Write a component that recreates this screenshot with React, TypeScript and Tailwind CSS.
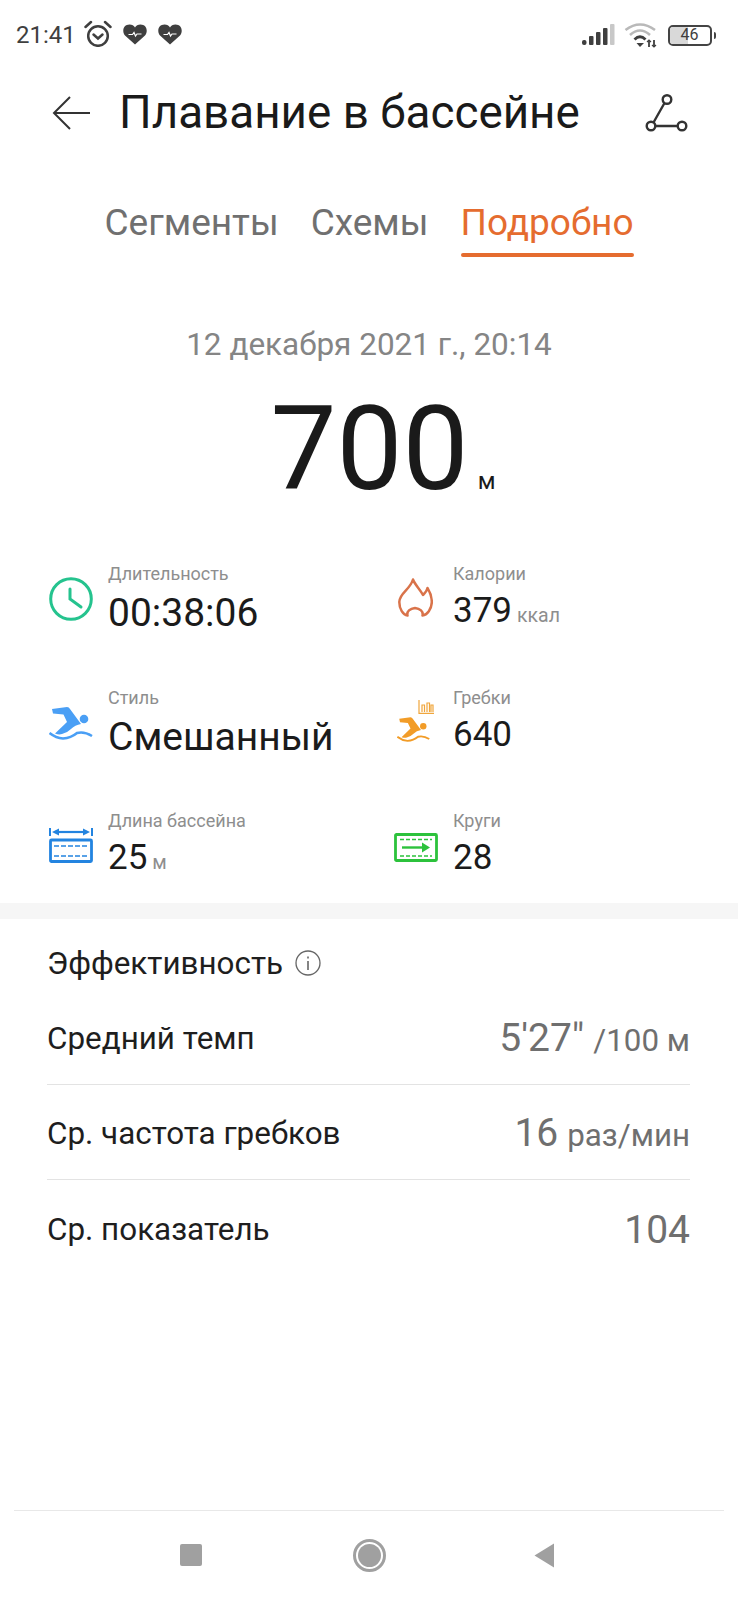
import React from "react";

const Swimmer = ({ color, className }: { color: string; className: string }) => (
  <svg viewBox="0 0 44 34" className={className} fill={color}>
    <path d="M3 2 L18 0 Q20 0 21 2 L32 17 Q26 18 22 22 Q18 26 13 27 Q10 28 6 26.500 L18 15 L14.500 7.500 L4 6.500 Z" />
    <circle cx="35" cy="12" r="4.300" />
    <path d="M0.500 26 Q7 31 14 31.500 Q22 31 28 26 Q35 24 43 29" fill="none" stroke={color} strokeWidth="2.500" />
  </svg>
);

const Stat = ({ icon, label, value, unit, big }: { icon: React.ReactNode; label: string; value: string; unit?: string; big?: boolean }) => (
  <div className="flex items-start">
    <div className="w-[59px] h-[70px] flex items-center shrink-0">{icon}</div>
    <div className="flex flex-col">
      <span className="text-[18px] leading-[20px] text-[#8e8e8e]">{label}</span>
      <span className={`flex items-baseline h-[44px] leading-[44px] text-[#1b1b1b] ${big ? "mt-[7px]" : "mt-[5px]"}`}>
        <span className={big ? "text-[39px] leading-[44px]" : "text-[35px] leading-[44px]"}>{value}</span>
        {unit && <span className="text-[19.500px] text-[#8e8e8e] ml-[5px]">{unit}</span>}
      </span>
    </div>
  </div>
);

const Row = ({ label, value, unit, last }: { label: string; value: string; unit?: string; last?: boolean }) => (
  <div className={`flex items-center justify-between h-[95px] pt-[4px] ${last ? "" : "border-b border-[#e3e3e3]"}`}>
    <span className="text-[31.400px] text-[#1e1e1e]">{label}</span>
    <span className="flex items-baseline text-[#6f6f6f]">
      <span className="text-[39px] leading-[44px]">{value}</span>
      {unit && <span className="text-[31.300px] leading-[44px] ml-[9px]">{unit}</span>}
    </span>
  </div>
);

export default function App() {
  return (
    <div className="w-[738px] h-[1599px] bg-white flex flex-col overflow-hidden font-['Roboto',sans-serif]">
      <div className="h-[70px] flex items-center justify-between pl-[16px] pr-[22px] shrink-0">
        <div className="flex items-center text-[#3f3f3f]">
          <span className="text-[24px] leading-[28px]">21:41</span>
          <svg viewBox="0 0 28 27" className="w-[28px] h-[27px] ml-[8px] mb-[4px]" fill="none" stroke="#3f3f3f" strokeWidth="2.500">
            <circle cx="14" cy="16" r="9.800" />
            <path d="M9.500 14.500 L14 18.500 L18.500 14.500" strokeLinecap="round" />
            <path d="M1.500 7 L7 2 M26.500 7 L21 2" strokeLinecap="round" />
          </svg>
          {[0, 1].map((i) => (
            <svg key={i} viewBox="0 0 24 21" className="w-[24px] h-[21px] mb-[2px] ml-[11px]">
              <path d="M12 20.500 L2 11.500 C-1.500 7 0.500 0.500 6.500 0.500 C9 0.500 11 1.500 12 3.500 C13 1.500 15 0.500 17.500 0.500 C23.500 0.500 25.500 7 22 11.500 Z" fill="#3f3f3f" />
              <path d="M5.500 10.500 H9.500 L11 8.500 L12.500 12 L14 10 H18.500" fill="none" stroke="#fff" strokeWidth="1.200" />
            </svg>
          ))}
        </div>
        <div className="flex items-center">
          <svg viewBox="0 0 34 22" className="w-[34px] h-[22px]">
            <rect x="0" y="16" width="4.500" height="5" rx="2" fill="#3f3f3f" />
            <rect x="7" y="12" width="4.500" height="9" rx="1" fill="#3f3f3f" />
            <rect x="14" y="8" width="4.500" height="13" rx="1" fill="#3f3f3f" />
            <rect x="21" y="4" width="4.500" height="17" rx="1" fill="#3f3f3f" />
            <rect x="28" y="0" width="4.500" height="21" rx="1" fill="#c8c8c8" />
          </svg>
          <svg viewBox="0 0 34 26" className="w-[34px] h-[26px] ml-[8px]" fill="none">
            <path d="M1.500 8 Q16 -3 31 8" stroke="#b9b9b9" strokeWidth="2.600" />
            <path d="M6 13 Q16 4 26 13" stroke="#b9b9b9" strokeWidth="2.600" />
            <path d="M10.500 17.500 Q16 12 21.500 17.500" stroke="#3f3f3f" strokeWidth="2.800" />
            <path d="M12.500 21 L20 21 L16 25 Z" fill="#3f3f3f" />
            <path d="M25 18 V25 M30 18 V25" stroke="#3f3f3f" strokeWidth="1.800" />
            <path d="M23 20 L25 18 L27 20 M28 23 L30 25 L32 23" stroke="#3f3f3f" strokeWidth="1.200" />
          </svg>
          <div className="relative ml-[10px] w-[44px] h-[21px] rounded-[5px] border-[2.500px] border-[#444] flex items-center overflow-hidden">
            <div className="w-[46%] h-full bg-[#d9d9d9]" />
            <span className="absolute inset-0 text-center text-[16px] leading-[16px] text-[#3f3f3f]">46</span>
          </div>
          <div className="w-[2.500px] h-[7px] ml-[2px] bg-[#444] rounded-r-[2px]" />
        </div>
      </div>

      <div className="h-[86px] flex items-center pl-[52px] pr-[50px] shrink-0">
        <svg viewBox="0 0 38 34" className="w-[38px] h-[34px] shrink-0" fill="none" stroke="#333" strokeWidth="2">
          <path d="M38 17 H2 M18 1 L2 17 L18 33" />
        </svg>
        <span className="ml-[29px] text-[45.800px] leading-[50px] text-[#1a1a1a] whitespace-nowrap">Плавание в бассейне</span>
        <svg viewBox="0 0 43 38" className="w-[43px] h-[38px] ml-auto shrink-0" fill="none" stroke="#333" strokeWidth="2.400">
          <circle cx="22" cy="5.500" r="4.300" />
          <circle cx="6" cy="32" r="4.300" />
          <circle cx="37" cy="32" r="4.300" />
          <path d="M19.500 9 L8.500 28.500 M10.300 32 H32.700" />
        </svg>
      </div>

      <div className="h-[170px] flex items-start justify-center pt-[39px] gap-[32px] text-[37px] text-[#707070] shrink-0">
        <span className="leading-[50px] pt-[3px]">Сегменты</span>
        <span className="leading-[50px] pt-[3px]">Схемы</span>
        <span className="flex flex-col items-center text-[#e56c2f]">
          <span className="leading-[50px] pt-[3px]">Подробно</span>
          <span className="w-full h-[4px] rounded-full bg-[#e56c2f] mt-[5px]" />
        </span>
      </div>

      <div className="text-center text-[31.500px] leading-[40px] text-[#858585] mt-[-1px] shrink-0">12 декабря 2021 г., 20:14</div>

      <div className="flex items-baseline justify-center h-[136px] mt-[16px] shrink-0 pl-[28px]">
        <span className="text-[117.500px] leading-[136px] text-[#1a1a1a]">700</span>
        <span className="text-[24px] text-[#1a1a1a] ml-[9px]">м</span>
      </div>

      <div className="grid grid-cols-[345px_1fr] grid-rows-[123.5px_123.5px_92px] pl-[49px] mt-[47px] shrink-0">
        <Stat
          label="Длительность"
          value="00:38:06"
          big
          icon={
            <svg viewBox="0 0 44 44" className="w-[44px] h-[44px]" fill="none" stroke="#25c38e" strokeWidth="3">
              <circle cx="22" cy="22" r="20.300" />
              <path d="M21 12 V22 L32 30" strokeLinecap="round" />
            </svg>
          }
        />
        <Stat
          label="Калории"
          value="379"
          unit="ккал"
          icon={
            <svg viewBox="0 0 35 39" className="w-[35px] h-[39px] ml-[4px] mb-[3px]" fill="none" stroke="#d9734a" strokeWidth="2.500" strokeLinejoin="round">
              <path d="M15 1.500 C17 7 22 11 25 17 C27 15 29 13 29.500 10 C32 14 33.800 18 33.800 24 C33.800 31 29 37 24.500 37.500 C25.500 33.500 22 30.500 17 30 C12 30.500 8.500 33.500 9.500 37.500 C5 37 1.300 31 1.300 24 C1.300 15 12 12 15 1.500 Z" />
            </svg>
          }
        />
        <Stat
          label="Стиль"
          value="Смешанный"
          big
          icon={<Swimmer color="#4a9ff5" className="w-[44px] h-[34px] mt-[2px]" />}
        />
        <Stat
          label="Гребки"
          value="640"
          icon={
            <div className="relative w-[38px] h-[42px] ml-[3px] mt-[-4px]">
              <svg viewBox="0 0 16 14" className="absolute left-[21px] top-0 w-[16px] h-[14px]" fill="none" stroke="#f0a63c" strokeWidth="1.200">
                <path d="M1 0 V13.400 H16 M4 12 V5 H6.500 V12 M9 12 V3 H11.500 V12 M13 12 V5 H15 V12" />
              </svg>
              <Swimmer color="#f29c27" className="absolute left-0 bottom-[-1px] w-[33px] h-[26px]" />
            </div>
          }
        />
        <Stat
          label="Длина бассейна"
          value="25"
          unit="м"
          icon={
            <svg viewBox="0 0 44 36" className="w-[44px] h-[36px] mt-[-2px]" fill="none" stroke="#2384e0">
              <path d="M1 1 V9 M43 1 V9" strokeWidth="2" />
              <path d="M6 5 H38" strokeWidth="2.200" />
              <path d="M3 5 L10 1.500 V8.500 Z M41 5 L34 1.500 V8.500 Z" fill="#2384e0" stroke="none" />
              <rect x="1.500" y="13" width="41" height="21.500" rx="1" strokeWidth="2.800" />
              <path d="M5 19 H39 M5 29 H39" strokeWidth="1.500" strokeDasharray="5 2" />
            </svg>
          }
        />
        <Stat
          label="Круги"
          value="28"
          icon={
            <svg viewBox="0 0 44 29" className="w-[44px] h-[29px] mt-[2px]" fill="none" stroke="#2cc23c">
              <rect x="1.500" y="1.500" width="41" height="26" rx="1" strokeWidth="2.800" />
              <path d="M6 6.500 H38 M6 23 H38" strokeWidth="1.500" strokeDasharray="4 2" />
              <path d="M8 14.500 H28" strokeWidth="2.400" />
              <path d="M28 9.500 L36 14.500 L28 19.500 Z" fill="#2cc23c" stroke="none" />
            </svg>
          }
        />
      </div>

      <div className="h-[16px] bg-[#f6f6f6] shrink-0" />

      <div className="pl-[47px] pr-[48px] shrink-0">
        <div className="h-[75px] flex items-center pt-[15px]">
          <span className="text-[31.400px] leading-[36px] text-[#1e1e1e]">Эффективность</span>
          <svg viewBox="0 0 26 26" className="w-[26px] h-[26px] ml-[12px] mb-[3px]" fill="none" stroke="#666" strokeWidth="1.300">
            <circle cx="13" cy="13" r="12" />
            <path d="M13 11 V20 M13 6.500 V8.500" strokeWidth="1.600" />
          </svg>
        </div>
        <div className="mt-[-4px]">
          <Row label="Средний темп" value={"5'27\""} unit="/100 м" />
          <Row label="Ср. частота гребков" value="16" unit="раз/мин" />
          <Row label="Ср. показатель" value="104" last />
        </div>
      </div>

      <div className="mt-auto mx-[14px] border-t border-[#e8e8e8] h-[89px] flex items-center pl-[166px] shrink-0">
        <div className="w-[22px] h-[22px] rounded-[2px] bg-[#a0a0a0]" />
        <div className="w-[33px] h-[33px] rounded-full border-[3px] border-[#a0a0a0] p-[2px] ml-[151px]">
          <div className="w-full h-full rounded-full bg-[#a0a0a0]" />
        </div>
        <svg viewBox="0 0 20 25" className="w-[20px] h-[25px] ml-[148px]">
          <path d="M0.500 12.500 L20 0.500 V24.500 Z" fill="#a0a0a0" />
        </svg>
      </div>
    </div>
  );
}
